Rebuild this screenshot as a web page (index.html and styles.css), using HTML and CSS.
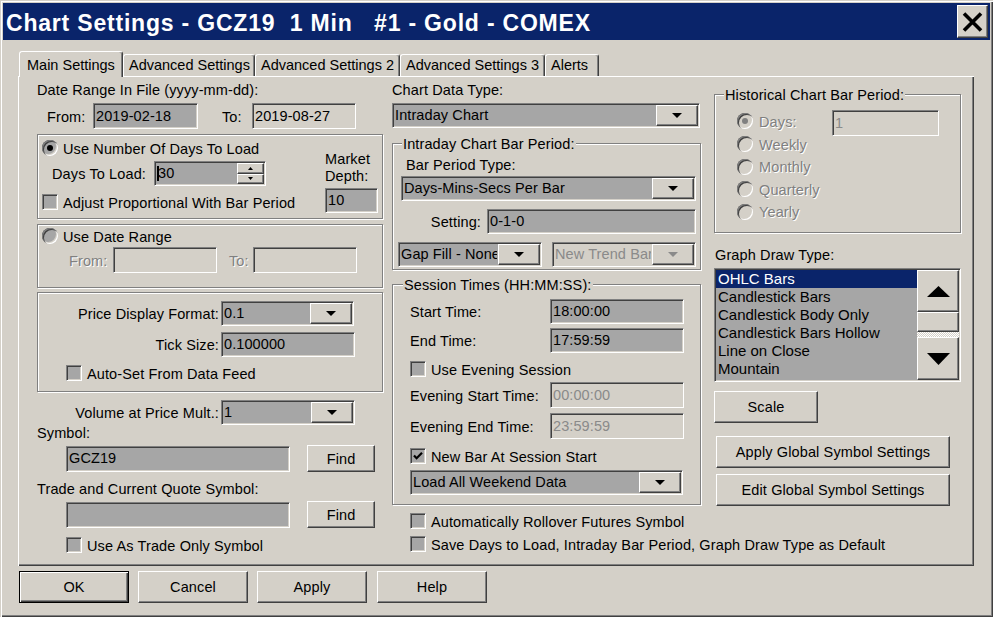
FILE: index.html
```html
<!DOCTYPE html>
<html>
<head>
<meta charset="utf-8">
<title>Chart Settings</title>
<link rel="stylesheet" href="styles.css">
</head>
<body>
<div class="window">
  <div class="titlebar">
    <span class="title">Chart Settings - GCZ19  1 Min   #1 - Gold - COMEX</span>
    <div class="closebtn"><svg width="21" height="20" viewBox="0 0 21 20"><path d="M2 1.5 L19 18.5 M19 1.5 L2 18.5" stroke="#000" stroke-width="3.6" fill="none"/></svg></div>
  </div>
  <div class="content">
    <div class="tabs">
      <div class="tab sel w-main">Main Settings</div>
      <div class="tab w-adv">Advanced Settings</div>
      <div class="tab w-adv2">Advanced Settings 2</div>
      <div class="tab w-adv3">Advanced Settings 3</div>
      <div class="tab w-alerts">Alerts</div>
    </div>
    <div class="panel">
      <!-- LEFT COLUMN -->
      <div class="col col-l">
        <div class="lbl">Date Range In File (yyyy-mm-dd):</div>
        <div class="row h26 mt5">
          <span class="lbl ml10 w46">From:</span>
          <div class="field h26 w105">2019-02-18</div>
          <span class="lbl ml24 w30">To:</span>
          <div class="field h26 light w104">2019-08-27</div>
        </div>
        <div class="group g1 mt5">
          <div class="g1-main">
            <div class="row h16 mt5"><span class="radio"><i></i></span><span class="lbl ml5">Use Number Of Days To Load</span></div>
            <div class="row h25 mt5">
              <span class="lbl ml10 w102">Days To Load:</span>
              <div class="field spin w112">
                <span class="v"><b class="caret"></b>30</span>
                <span class="spinbtns">
                  <span class="sbb"><svg width="5" height="3" viewBox="0 0 5 3"><path d="M0 3h5L2.5 0z"/></svg></span>
                  <span class="sbb"><svg width="5" height="3" viewBox="0 0 5 3"><path d="M0 0h5L2.5 3z"/></svg></span>
                </span>
              </div>
            </div>
            <div class="row h16 mt8"><span class="chk"></span><span class="lbl ml5">Adjust Proportional With Bar Period</span></div>
          </div>
          <div class="g1-side">
            <div class="lbl">Market</div>
            <div class="lbl">Depth:</div>
            <div class="field w53 mt4">10</div>
          </div>
        </div>
        <div class="group g2 mt5">
          <div class="row h16 mt3 ml4"><span class="radio"></span><span class="lbl ml5">Use Date Range</span></div>
          <div class="row h26 mt3">
            <span class="lbl dis-t ml31 w44">From:</span>
            <div class="field h26 light w104"></div>
            <span class="lbl dis-t ml12 w24">To:</span>
            <div class="field h26 light w104"></div>
          </div>
        </div>
        <div class="group g3 mt4">
          <div class="row h25 mt8">
            <span class="lbl rlbl w183">Price Display Format:</span>
            <div class="field combo w133"><span class="v">0.1</span><span class="dd"><svg width="10" height="5" viewBox="0 0 10 5"><path d="M0 0h10L5 5z"/></svg></span></div>
          </div>
          <div class="row h25 mt6">
            <span class="lbl rlbl w183">Tick Size:</span>
            <div class="field w134">0.100000</div>
          </div>
          <div class="row h16 mt8 ml28"><span class="chk"></span><span class="lbl ml5">Auto-Set From Data Feed</span></div>
        </div>
        <div class="row h25 mt8">
          <span class="lbl rlbl w184">Volume at Price Mult.:</span>
          <div class="field combo w134"><span class="v">1</span><span class="dd"><svg width="10" height="5" viewBox="0 0 10 5"><path d="M0 0h10L5 5z"/></svg></span></div>
        </div>
        <div class="lbl mtm1">Symbol:</div>
        <div class="row h27 mt4 ml29">
          <div class="field h26 w224">GCZ19</div>
          <div class="btn h27 w68 ml17">Find</div>
        </div>
        <div class="lbl mt8">Trade and Current Quote Symbol:</div>
        <div class="row h27 mt4 ml29">
          <div class="field h26 w224"></div>
          <div class="btn h27 w68 ml17">Find</div>
        </div>
        <div class="row h16 mt9 ml29"><span class="chk"></span><span class="lbl ml5">Use As Trade Only Symbol</span></div>
      </div>

      <!-- MIDDLE COLUMN -->
      <div class="col col-m">
        <div class="lbl">Chart Data Type:</div>
        <div class="field combo w308 mt5"><span class="v">Intraday Chart</span><span class="dd"><svg width="10" height="5" viewBox="0 0 10 5"><path d="M0 0h10L5 5z"/></svg></span></div>
        <div class="group g-intra mt15">
          <span class="legend ml9">Intraday Chart Bar Period:</span>
          <div class="lbl mt4 ml13">Bar Period Type:</div>
          <div class="field combo w295 mt3 ml8"><span class="v">Days-Mins-Secs Per Bar</span><span class="dd"><svg width="10" height="5" viewBox="0 0 10 5"><path d="M0 0h10L5 5z"/></svg></span></div>
          <div class="row h25 mt8">
            <span class="lbl rlbl w94 pr6">Setting:</span>
            <div class="field w209">0-1-0</div>
          </div>
          <div class="row h25 mt8">
            <div class="field combo w144 ml5"><span class="v">Gap Fill - None</span><span class="dd"><svg width="10" height="5" viewBox="0 0 10 5"><path d="M0 0h10L5 5z"/></svg></span></div>
            <div class="field combo dis w144 ml10"><span class="v">New Trend Bar</span><span class="dd"><svg width="10" height="5" viewBox="0 0 10 5"><path d="M0 0h10L5 5z" fill="#8a8a8a"/></svg></span></div>
          </div>
        </div>
        <div class="group g-sess mt14">
          <span class="legend ml10">Session Times (HH:MM:SS):</span>
          <div class="row h25 mt6"><span class="lbl ml17 w140">Start Time:</span><div class="field w134">18:00:00</div></div>
          <div class="row h25 mt4"><span class="lbl ml17 w140">End Time:</span><div class="field w134">17:59:59</div></div>
          <div class="row h16 mt8 ml17"><span class="chk"></span><span class="lbl ml5">Use Evening Session</span></div>
          <div class="row h26 mt5"><span class="lbl ml17 w140">Evening Start Time:</span><div class="field h26 dis w134">00:00:00</div></div>
          <div class="row h26 mt5"><span class="lbl ml17 w140">Evening End Time:</span><div class="field h26 dis w134">23:59:59</div></div>
          <div class="row h16 mt9 ml17"><span class="chk"><svg width="14" height="14" viewBox="0 0 14 14"><path d="M3 6.5 L5.6 9.2 L11 3.8" stroke="#000" stroke-width="2.2" fill="none"/></svg></span><span class="lbl ml5">New Bar At Session Start</span></div>
          <div class="field combo w273 mt6 ml17"><span class="v">Load All Weekend Data</span><span class="dd"><svg width="10" height="5" viewBox="0 0 10 5"><path d="M0 0h10L5 5z"/></svg></span></div>
        </div>
        <div class="row h16 mt8 ml18"><span class="chk"></span><span class="lbl ml5">Automatically Rollover Futures Symbol</span></div>
        <div class="row h16 mt7 ml18"><span class="chk"></span><span class="lbl ml5">Save Days to Load, Intraday Bar Period, Graph Draw Type as Default</span></div>
      </div>

      <!-- RIGHT COLUMN -->
      <div class="col col-r">
        <div class="group g-hist mt13">
          <span class="legend ml9">Historical Chart Bar Period:</span>
          <div class="row hrow1 mt7">
            <span class="radio dis ml22 mt3"><i></i></span>
            <span class="lbl dis-t ml6 w73 mt3">Days:</span>
            <div class="field h26 dis w107">1</div>
          </div>
          <div class="row h16"><span class="radio dis ml22"></span><span class="lbl dis-t ml6">Weekly</span></div>
          <div class="row h16 mt6h"><span class="radio dis ml22"></span><span class="lbl dis-t ml6">Monthly</span></div>
          <div class="row h16 mt6h"><span class="radio dis ml22"></span><span class="lbl dis-t ml6">Quarterly</span></div>
          <div class="row h16 mt6h"><span class="radio dis ml22"></span><span class="lbl dis-t ml6">Yearly</span></div>
        </div>
        <div class="lbl mt13 ml1">Graph Draw Type:</div>
        <div class="listbox mt5">
          <div class="items">
            <div class="item sel">OHLC Bars</div>
            <div class="item">Candlestick Bars</div>
            <div class="item">Candlestick Body Only</div>
            <div class="item">Candlestick Bars Hollow</div>
            <div class="item">Line on Close</div>
            <div class="item">Mountain</div>
          </div>
          <div class="vscroll">
            <div class="sbtn sb-up"><svg width="23" height="11" viewBox="0 0 23 11"><path d="M0 11h23L11.5 0z"/></svg></div>
            <div class="thumb"></div>
            <div class="track"></div>
            <div class="sbtn sb-dn"><svg width="23" height="12" viewBox="0 0 23 12"><path d="M0 0h23L11.5 12z"/></svg></div>
          </div>
        </div>
        <div class="btn h32 w104 mt9">Scale</div>
        <div class="btn h32 w234 mt13 ml2">Apply Global Symbol Settings</div>
        <div class="btn h32 w234 mt6 ml2">Edit Global Symbol Settings</div>
      </div>
    </div>
    <div class="footer">
      <div class="btn def fb">OK</div>
      <div class="btn fb">Cancel</div>
      <div class="btn fb">Apply</div>
      <div class="btn fb ml1">Help</div>
    </div>
  </div>
</div>
</body>
</html>
```

FILE: styles.css
```css
* { box-sizing: border-box; }
html, body { margin: 0; padding: 0; }
body {
  width: 993px; height: 617px; overflow: hidden;
  background: #d4d0c8;
  font-family: "Liberation Sans", Arial, sans-serif;
  font-size: 14.5px; line-height: 17px; color: #000;
  letter-spacing: 0.12px;
}
.window {
  width: 993px; height: 617px; padding: 3px;
  background: #d4d0c8;
  box-shadow: inset 1px 1px #d4d0c8, inset 2px 2px #fff, inset -1px -1px #404040, inset -2px -2px #808080;
  display: flex; flex-direction: column;
}
.titlebar {
  height: 37px; background: #0a246a; color: #fff;
  display: flex; align-items: center; padding-left: 3px;
}
.title {
  white-space: pre; font-weight: bold; font-size: 23px; letter-spacing: 0.8px; line-height: 26px;
  padding-top: 2px;
}
.closebtn {
  margin-left: auto; margin-right: 2px; width: 31px; height: 33px;
  background: #d4d0c8; border: 1px solid; border-color: #fff #404040 #404040 #fff;
  box-shadow: inset -1px -1px #808080;
  display: flex; align-items: center; justify-content: center;
}
.content { padding: 11px 0 0 15px; display: flex; flex-direction: column; }

.tabs { display: flex; align-items: flex-end; height: 25px; margin-left: 1px; letter-spacing: 0; }
.tab {
  height: 22px; padding: 2px 0 0 5px; white-space: nowrap;
  border: 1px solid; border-bottom: none;
  border-color: #fff #404040 transparent #fff;
  box-shadow: inset -1px 0 #808080;
  border-radius: 3px 3px 0 0;
  background: #d4d0c8;
}
.tab.sel { height: 26px; margin-bottom: -1px; padding: 5px 0 0 7px; position: relative; z-index: 1; }
.w-main { width: 104px; }
.w-adv { width: 132px; }
.w-adv2 { width: 145px; }
.w-adv3 { width: 145px; }
.w-alerts { width: 54px; }

.panel {
  width: 956px; height: 490px;
  box-shadow: inset 1px 1px #fff, inset -1px -1px #404040, inset -2px -2px #808080;
  padding: 5px 0 0 19px;
  display: flex; align-items: flex-start;
}
.col { display: flex; flex-direction: column; align-items: flex-start; }
.col-l { width: 346px; }
.col-m { width: 309px; margin-left: 9px; }
.col-r { width: 247px; margin-left: 13px; }

.footer { display: flex; gap: 9px; margin: 5px 0 0 1px; }
.fb { width: 110px; height: 32px; }

.lbl { line-height: 17px; height: 17px; padding-top: 1px; white-space: nowrap; flex: none; }
.rlbl { text-align: right; padding-right: 2px; }
.dis-t { color: #808080; text-shadow: 1px 1px #fff; }
.row { display: flex; align-items: center; flex: none; }

.group {
  border: 1px solid #808080;
  box-shadow: inset 1px 1px #fff, 1px 1px #fff;
  display: flex; flex-direction: column; align-items: flex-start;
  flex: none;
}
.legend { margin-top: -9px; background: #d4d0c8; padding: 1px 1px 0; height: 17px; line-height: 17px; white-space: nowrap; }
.g1 { width: 346px; height: 85px; flex-direction: row; }
.g1-main { flex: 1; padding-left: 4px; display: flex; flex-direction: column; }
.g1-side { width: 53px; margin-right: 4px; padding-top: 15px; display: flex; flex-direction: column; }
.g2 { width: 346px; height: 64px; }
.g3 { width: 346px; height: 100px; }
.g-intra { width: 309px; height: 127px; }
.g-sess { width: 309px; height: 221px; }
.g-hist { width: 247px; height: 139px; }
.hrow1 { height: 26px; align-items: flex-start; }

.field {
  height: 25px; flex: none;
  background: #a6a6a6;
  border: 1px solid; border-color: #808080 #fff #fff #808080;
  box-shadow: inset 1px 1px #404040, inset -1px -1px #d4d0c8;
  padding: 0 2px;
  display: flex; align-items: center;
  white-space: nowrap; overflow: hidden;
  letter-spacing: 0.1px;
}
.field.light { background: #d4d0c8; }
.field.dis { background: #d4d0c8; color: #8a8a8a; }
.combo { padding-right: 0; }
.combo .v, .spin .v { flex: 1; overflow: hidden; white-space: nowrap; }
.dd {
  width: 42px; height: 21px; margin: 1px; flex: none;
  background: #d4d0c8; border: 1px solid; border-color: #fff #404040 #404040 #fff;
  box-shadow: inset -1px -1px #808080;
  display: flex; align-items: center; justify-content: center;
}
.spin { padding-right: 0; }
.caret { display: inline-block; width: 2px; height: 15px; background: #000; vertical-align: -3px; margin-right: -1px; }
.spinbtns { width: 27px; height: 21px; margin: 1px; display: flex; flex-direction: column; flex: none; }
.sbb {
  flex: 1; background: #d4d0c8; border: 1px solid; border-color: #fff #404040 #404040 #fff;
  box-shadow: inset -1px -1px #808080;
  display: flex; align-items: center; justify-content: center;
}

.chk {
  width: 16px; height: 16px; flex: none;
  background: #a6a6a6;
  border: 1px solid; border-color: #808080 #fff #fff #808080;
  box-shadow: inset 1px 1px #404040, inset -1px -1px #d4d0c8;
  display: flex; align-items: center; justify-content: center;
}
.radio {
  width: 16px; height: 16px; border-radius: 50%; flex: none;
  background: #a6a6a6;
  box-shadow: inset 1px 1px #808080, inset 2px 2px #404040, inset -1px -1px #fff, inset -2px -2px #d4d0c8;
  display: flex; align-items: center; justify-content: center;
}
.radio i { width: 6px; height: 6px; border-radius: 50%; background: #000; }
.radio.dis { background: #d4d0c8; }
.radio.dis i { background: #808080; }

.btn {
  background: #d4d0c8; flex: none;
  border: 1px solid; border-color: #fff #404040 #404040 #fff;
  box-shadow: inset -1px -1px #808080;
  display: flex; align-items: center; justify-content: center;
  white-space: nowrap; padding-top: 1px;
}
.btn.def { border-color: #000; box-shadow: inset 1px 1px #fff, inset -1px -1px #404040, inset -2px -2px #808080; }

.listbox {
  width: 247px; height: 114px; flex: none;
  border: 1px solid; border-color: #808080 #fff #fff #808080;
  box-shadow: inset 1px 1px #404040, inset -1px -1px #d4d0c8;
  background: #a6a6a6; padding: 1px;
  display: flex;
}
.items { flex: 1; font-size: 15px; letter-spacing: 0; }
.item { height: 18px; line-height: 18px; padding-left: 2px; white-space: nowrap; }
.item.sel { background: #0a246a; color: #fff; }
.vscroll { width: 42px; display: flex; flex-direction: column; }
.sbtn {
  background: #d4d0c8; border: 1px solid; border-color: #fff #404040 #404040 #fff;
  box-shadow: inset -1px -1px #808080;
  display: flex; align-items: center; justify-content: center;
}
.sb-up { height: 42px; }
.sb-dn { height: 43px; }
.thumb {
  height: 20px; background: #d4d0c8; border: 1px solid; border-color: #fff #404040 #404040 #fff;
  box-shadow: inset -1px -1px #808080;
}
.track { height: 5px; background: repeating-conic-gradient(#fff 0 25%, #d4d0c8 0 50%) 0 0 / 2px 2px; }

/* sizes */
.h16 { height: 16px; }
.h25 { height: 25px; }
.h26 { height: 26px; }
.h27 { height: 27px; }
.h32 { height: 32px; }
.w24 { width: 24px; } .w30 { width: 30px; } .w44 { width: 44px; } .w46 { width: 46px; }
.w53 { width: 53px; } .w68 { width: 68px; } .w73 { width: 73px; } .w94 { width: 94px; }
.w102 { width: 102px; } .w104 { width: 104px; } .w105 { width: 105px; } .w107 { width: 107px; }
.w112 { width: 112px; } .w133 { width: 133px; } .w134 { width: 134px; } .w140 { width: 140px; }
.w144 { width: 144px; } .w183 { width: 183px; } .w184 { width: 184px; } .w209 { width: 209px; }
.w224 { width: 224px; } .w234 { width: 234px; } .w273 { width: 273px; } .w295 { width: 295px; }
.w308 { width: 308px; }
.pr6 { padding-right: 6px; }

/* spacing */
.mtm1 { margin-top: -1px; }
.mt3 { margin-top: 3px; } .mt4 { margin-top: 4px; } .mt5 { margin-top: 5px; } .mt6 { margin-top: 6px; }
.mt6h { margin-top: 6.5px; } .mt7 { margin-top: 7px; } .mt8 { margin-top: 8px; } .mt9 { margin-top: 9px; }
.mt13 { margin-top: 13px; } .mt14 { margin-top: 14px; } .mt15 { margin-top: 15px; }
.ml1 { margin-left: 1px; } .ml2 { margin-left: 2px; } .ml4 { margin-left: 4px; } .ml5 { margin-left: 5px; }
.ml6 { margin-left: 6px; } .ml8 { margin-left: 8px; } .ml9 { margin-left: 9px; } .ml10 { margin-left: 10px; }
.ml12 { margin-left: 12px; } .ml13 { margin-left: 13px; } .ml17 { margin-left: 17px; } .ml18 { margin-left: 18px; }
.ml22 { margin-left: 22px; } .ml24 { margin-left: 24px; } .ml28 { margin-left: 28px; } .ml29 { margin-left: 29px; }
.ml31 { margin-left: 31px; }
```
